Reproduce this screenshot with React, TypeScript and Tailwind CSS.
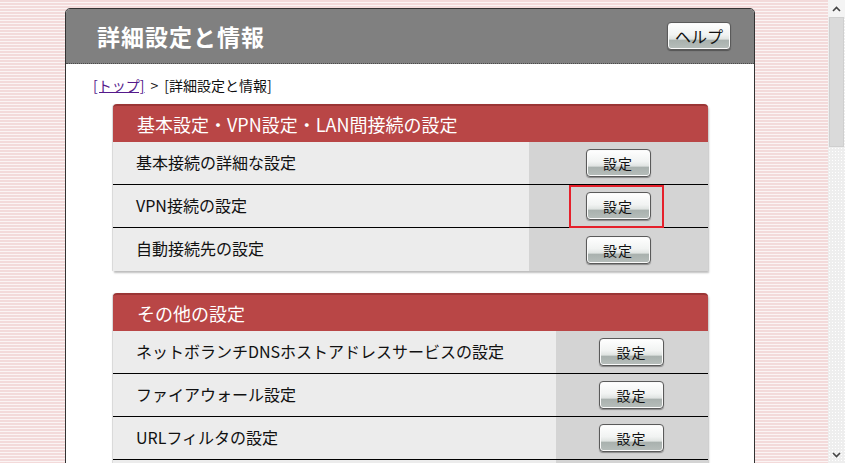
import { ReactNode } from "react";

type Row = { label: string; focus?: boolean; empty?: boolean };

const FONT = "font-['Noto_Sans_CJK_JP','Noto_Sans',sans-serif]";

const SettingButton = ({ children, wide }: { children: ReactNode; wide?: boolean }) => (
  <button
    className={`relative ${wide ? "w-[64px] h-[28px] text-[16px]" : "w-[65px] h-[28px] text-[14px] tracking-[1px]"} rounded-[4px] border border-[#5a5a5a] bg-[linear-gradient(#ffffff_0%,#f1f3f2_45%,#dfe3e1_62%,#a9b1ae_66%,#b7bebb_100%)] text-[#111] shadow-[inset_0_0_0_1px_#fafafa,0_1px_1px_rgba(0,0,0,0.35)] leading-none flex items-center justify-center`}
  >
    {children}
  </button>
);

const Section = ({ title, rows, leftWidth }: { title: string; rows: Row[]; leftWidth: string }) => (
  <div className="w-[595px] ml-[47px] rounded-t-[4px] shadow-[1px_2px_2px_rgba(0,0,0,0.25),-1px_0_1px_rgba(0,0,0,0.15)] bg-[#ececec]">
    <div className="h-[38px] rounded-t-[4px] border-t-2 border-[#9a3535] bg-[#b94646] text-white text-[18px] flex items-center pl-[24px]">
      {title}
    </div>
    {rows.map((row, i) => (
      <div
        key={i}
        className={`flex h-[43px] ${i < rows.length - 1 ? "border-b border-black" : ""}`}
      >
        <div className={`${leftWidth} bg-[#ececec] flex items-center pl-[23px] pb-[3px] text-[16px] text-[#111]`}>
          {row.label}
        </div>
        <div className="flex-1 bg-[#d4d4d4] flex items-center justify-center pr-[1px]">
          {!row.empty && (
            <div className="relative">
              <SettingButton>設定</SettingButton>
              {row.focus && (
                <div className="absolute -left-[17px] -right-[13px] -top-[7px] -bottom-[8px] border-2 border-[#e5202b]" />
              )}
            </div>
          )}
        </div>
      </div>
    ))}
  </div>
);

const App = () => {
  return (
    <div className={`w-[845px] h-[463px] overflow-hidden flex ${FONT}`}>
      <div className="flex-1 bg-[repeating-linear-gradient(#f3dada_0px,#f3dada_2px,#fbf4f4_2px,#fbf4f4_3px)] pl-[65px] pt-[8px]">
        <div className="w-[690px] h-[470px] bg-white border border-[#333] rounded-t-[5px]">
          <div className="h-[55px] bg-[#808080] rounded-t-[4px] border-b border-dotted border-[#4a4a4a] flex items-center justify-between pl-[31px] pr-[23px]">
            <h1 className="text-white text-[23px] font-bold tracking-[1px]">詳細設定と情報</h1>
            <SettingButton wide>ヘルプ</SettingButton>
          </div>
          <div className="pl-[27px] pt-[12px] text-[14px] text-[#111] leading-[18px] flex gap-[6px]">
            <a className="text-[#551a8b] underline">[トップ]</a>
            <span>&gt;</span>
            <span>[詳細設定と情報]</span>
          </div>
          <div className="pt-[10px] flex flex-col gap-[22px]">
            <Section
              title="基本設定・VPN設定・LAN間接続の設定"
              leftWidth="w-[416px]"
              rows={[
                { label: "基本接続の詳細な設定" },
                { label: "VPN接続の設定", focus: true },
                { label: "自動接続先の設定" },
              ]}
            />
            <Section
              title="その他の設定"
              leftWidth="w-[443px]"
              rows={[
                { label: "ネットボランチDNSホストアドレスサービスの設定" },
                { label: "ファイアウォール設定" },
                { label: "URLフィルタの設定" },
                { label: "", empty: true },
              ]}
            />
          </div>
        </div>
      </div>
      <div className="w-[17px] h-full bg-[#eeeeee] bg-[radial-gradient(#ffffff_0.6px,transparent_0.8px)] bg-[length:3px_3px] flex flex-col">
        <div className="h-[17px] flex items-center justify-center bg-[#f4f4f4]">
          <svg width="9" height="6" viewBox="0 0 9 6">
            <path d="M1 5 L4.5 1.5 L8 5" stroke="#444" strokeWidth="1.6" fill="none" />
          </svg>
        </div>
        <div className="mx-[1px] h-[130px] bg-[#dadada] border border-[#cfcfcf]" />
        <div className="flex-1" />
        <div className="h-[17px] flex items-center justify-center">
          <svg width="9" height="6" viewBox="0 0 9 6">
            <path d="M1 1 L4.5 4.5 L8 1" stroke="#444" strokeWidth="1.6" fill="none" />
          </svg>
        </div>
      </div>
    </div>
  );
};

export default App;
